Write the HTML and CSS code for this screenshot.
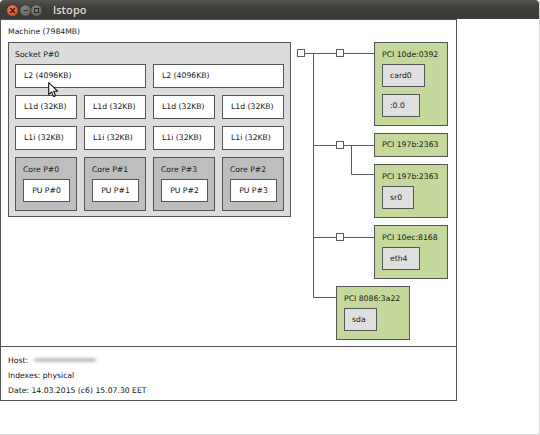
FILE: index.html
```html
<!DOCTYPE html>
<html>
<head>
<meta charset="utf-8">
<title>lstopo</title>
<link rel="stylesheet" href="styles.css">
</head>
<body>
<div class="window">
  <div class="titlebar">
    <div class="buttons">
      <span class="btn close"><svg width="11" height="11" viewBox="0 0 11 11"><path d="M3.6 3.6L7.4 7.4M7.4 3.6L3.6 7.4" stroke="#3a1a10" stroke-width="1.4" stroke-linecap="round"/></svg></span>
      <span class="btn min"><svg width="11" height="11" viewBox="0 0 11 11"><path d="M3.5 5.5H7.5" stroke="#2c2b28" stroke-width="1.2"/></svg></span>
      <span class="btn max"><svg width="11" height="11" viewBox="0 0 11 11"><rect x="3.5" y="3.5" width="4" height="4" fill="none" stroke="#2c2b28" stroke-width="1"/></svg></span>
    </div>
    <span class="title">lstopo</span>
  </div>

  <div class="machine">
    <div class="label machine-label">Machine (7984MB)</div>
    <div class="machine-row">
      <div class="socket">
        <div class="label">Socket P#0</div>
        <div class="socket-grid">
          <div class="cache l2">L2 (4096KB)</div>
          <div class="cache l2">L2 (4096KB)</div>
          <div class="cache">L1d (32KB)</div>
          <div class="cache">L1d (32KB)</div>
          <div class="cache">L1d (32KB)</div>
          <div class="cache">L1d (32KB)</div>
          <div class="cache">L1i (32KB)</div>
          <div class="cache">L1i (32KB)</div>
          <div class="cache">L1i (32KB)</div>
          <div class="cache">L1i (32KB)</div>
          <div class="core"><div class="label">Core P#0</div><div class="pu">PU P#0</div></div>
          <div class="core"><div class="label">Core P#1</div><div class="pu">PU P#1</div></div>
          <div class="core"><div class="label">Core P#3</div><div class="pu">PU P#2</div></div>
          <div class="core"><div class="label">Core P#2</div><div class="pu">PU P#3</div></div>
        </div>
      </div>

      <div class="pci-tree">
        <svg class="wires" width="152" height="300" viewBox="0 0 152 300">
          <g stroke="#5a5a5a" stroke-width="1" fill="none">
            <path d="M8 11.5H39.5M47 11.5H77M16.5 11.5V255.5M16.5 103.5H39.5M47 103.5H77M54.5 103.5V132.5H77M16.5 195.5H39.5M47 195.5H77M16.5 255.5H39"/>
            <rect x="0.5" y="7.5" width="7" height="7" fill="#fff"/>
            <rect x="39.5" y="7.5" width="7" height="7" fill="#fff"/>
            <rect x="39.5" y="99.5" width="7" height="7" fill="#fff"/>
            <rect x="39.5" y="191.5" width="7" height="7" fill="#fff"/>
          </g>
        </svg>
        <div class="pci">
          <div class="label">PCI 10de:0392</div>
          <div class="pci-children">
            <div class="osdev w43">card0</div>
            <div class="osdev w38">:0.0</div>
          </div>
        </div>
        <div class="pci solo">
          <div class="label">PCI 197b:2363</div>
        </div>
        <div class="pci">
          <div class="label">PCI 197b:2363</div>
          <div class="pci-children">
            <div class="osdev w32">sr0</div>
          </div>
        </div>
        <div class="pci">
          <div class="label">PCI 10ec:8168</div>
          <div class="pci-children">
            <div class="osdev w38">eth4</div>
          </div>
        </div>
        <div class="pci last">
          <div class="label">PCI 8086:3a22</div>
          <div class="pci-children">
            <div class="osdev w33">sda</div>
          </div>
        </div>
      </div>
    </div>
  </div>

  <div class="legend">
    <div class="line">Host: <span class="blur"></span></div>
    <div class="line">Indexes: physical</div>
    <div class="line">Date: 14.03.2015 (c6) 15.07.30 EET</div>
  </div>

  <svg class="cursor" width="11" height="16" viewBox="0 0 11 16">
    <path d="M0.7 0.7V12.6L3.6 9.9L5.6 14.6L7.6 13.7L5.7 9.2H9.6Z" fill="#fff" stroke="#111" stroke-width="1.1" stroke-linejoin="round"/>
  </svg>
</div>
</body>
</html>
```

FILE: styles.css
```css
html, body {
  margin: 0;
  padding: 0;
  background: #ffffff;
}

body {
  font-family: "DejaVu Sans", "Liberation Sans", sans-serif;
  font-size: 7.7px;
  color: #161616;
}

.window {
  position: relative;
  width: 540px;
  height: 435px;
  box-sizing: border-box;
  border-right: 1px solid #d6d6d6;
  border-bottom: 1px solid #d6d6d6;
  background: #ffffff;
  overflow: hidden;
}

/* ---------- title bar ---------- */
.titlebar {
  height: 19px;
  display: flex;
  align-items: center;
  background: linear-gradient(#56544f 0%, #403f3b 35%, #3a3935 100%);
  border-radius: 4px 4px 0 0;
}

.buttons {
  display: flex;
  align-items: center;
  margin-left: 7px;
  margin-top: 1px;
}

.btn {
  width: 11px;
  height: 11px;
  border-radius: 50%;
  display: block;
}

.btn svg {
  display: block;
}

.btn.close {
  background: radial-gradient(circle at 40% 35%, #f7825c 0%, #e4572e 55%, #b9391a 100%);
  box-shadow: 0 0 0 0.5px #2a2926;
}

.btn.min {
  margin-left: 2px;
  background: radial-gradient(circle at 40% 35%, #8a8884 0%, #6a6864 60%, #4f4e4a 100%);
  box-shadow: 0 0 0 0.5px #2a2926;
}

.btn.max {
  background: radial-gradient(circle at 40% 35%, #8a8884 0%, #6a6864 60%, #4f4e4a 100%);
  box-shadow: 0 0 0 0.5px #2a2926;
}

.title {
  margin-left: 11px;
  font-family: "Open Sans", "DejaVu Sans", sans-serif;
  font-size: 11px;
  font-weight: 600;
  color: #dfdbd2;
  letter-spacing: 0.1px;
}

/* ---------- machine ---------- */
.label {
  line-height: 14px;
  margin-bottom: 2px;
  white-space: nowrap;
}

.machine {
  width: 457px;
  height: 328px;
  box-sizing: border-box;
  border: 1px solid #555555;
  padding: 5px 7px 0 7px;
  background: #ffffff;
}

.machine-label {
  margin-bottom: 3px;
}

.machine-row {
  display: flex;
  align-items: flex-start;
  gap: 6px;
}

/* ---------- socket ---------- */
.socket {
  width: 283px;
  box-sizing: border-box;
  background: #dcdcdc;
  border: 1px solid #555555;
  padding: 5px 6px 5px 6px;
}

.socket-grid {
  display: grid;
  grid-template-columns: repeat(4, 62px);
  column-gap: 7px;
  row-gap: 7px;
}

.cache {
  height: 24px;
  box-sizing: border-box;
  background: #ffffff;
  border: 1px solid #555555;
  padding-left: 8px;
  line-height: 22px;
  white-space: nowrap;
}

.cache.l2 {
  grid-column: span 2;
}

.core {
  height: 54px;
  box-sizing: border-box;
  background: #bebebe;
  border: 1px solid #555555;
  padding: 5px 6px 8px 7px;
}

.pu {
  width: 47px;
  height: 23px;
  box-sizing: border-box;
  background: #ffffff;
  border: 1px solid #555555;
  line-height: 21px;
  text-align: center;
  white-space: nowrap;
}

/* ---------- PCI tree ---------- */
.pci-tree {
  position: relative;
  width: 152px;
  display: flex;
  flex-direction: column;
  align-items: flex-start;
  gap: 7px;
}

.wires {
  position: absolute;
  left: 0;
  top: 0;
  z-index: 0;
}

.pci {
  position: relative;
  z-index: 1;
  width: 74px;
  box-sizing: border-box;
  margin-left: 77px;
  background: #c5d89c;
  border: 1px solid #555555;
  padding: 5px 7px 8px 7px;
  color: #141a0c;
}

.pci.solo {
  height: 24px;
  padding-top: 4px;
  padding-bottom: 0;
}

.pci.last {
  margin-left: 39px;
}

.pci-children {
  display: flex;
  flex-direction: column;
  align-items: flex-start;
  gap: 7px;
}

.osdev {
  height: 23px;
  box-sizing: border-box;
  background: #dfdfdf;
  border: 1px solid #555555;
  line-height: 21px;
  padding-left: 7px;
  white-space: nowrap;
  color: #161616;
}

.w43 { width: 43px; }
.w38 { width: 38px; }
.w33 { width: 33px; }
.w32 { width: 32px; }

/* ---------- legend ---------- */
.legend {
  width: 457px;
  height: 54px;
  box-sizing: border-box;
  border: 1px solid #555555;
  border-top: none;
  padding: 6px 7px 0 7px;
}

.legend .line {
  line-height: 15px;
  white-space: nowrap;
}

.blur {
  display: inline-block;
  width: 62px;
  height: 4px;
  margin-left: 3px;
  vertical-align: 1px;
  background: #bdbdbd;
  border-radius: 2px;
  filter: blur(1.4px);
}

/* ---------- mouse pointer ---------- */
.cursor {
  position: absolute;
  left: 48px;
  top: 82px;
  z-index: 5;
}
```
